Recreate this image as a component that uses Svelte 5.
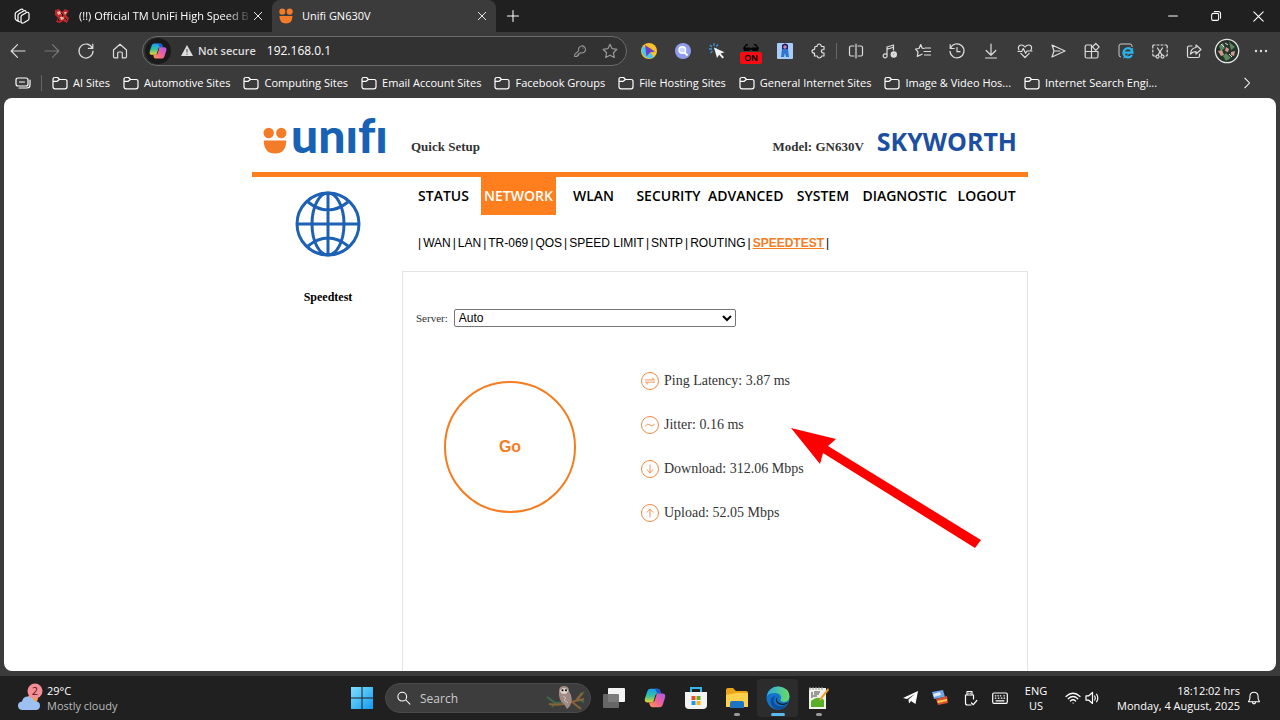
<script lang="ts">
  type Folder = { name: string };

  // stroked 16x16 icons
  const icons: Record<string, string> = {
    workspaces: 'M3.5 13 L2.2 12 Q1.2 11.4 1.2 10.2 V6 Q1.2 4.8 2.2 4.2 L7 1.3 Q8.4 .6 9 1.8 M6 14 Q4 13.6 4 12 V7.6 Q4 6.4 5 5.8 L10 2.8 Q11.4 2.2 12 3.3 M7 8.8 Q7 7.8 7.9 7.2 L12.5 4.5 Q15 3.6 15 6 V10.5 Q15 11.6 14 12.2 L9.8 14.7 Q7 15.8 7 13.4 Z',
    back: 'M15 8 H1.2 M7.5 1.7 L1.2 8 L7.5 14.3',
    forward: 'M1 8 H14.8 M8.5 1.7 L14.8 8 L8.5 14.3',
    reload: 'M14.4 5.2 A7 7 0 1 0 15 8 M14.8 1 V5.4 H10.4',
    home: 'M1.5 7 L8 1.2 L14.5 7 V13.5 Q14.5 14.8 13.2 14.8 H10.3 V10 Q10.3 9 9.3 9 H6.7 Q5.7 9 5.7 10 V14.8 H2.8 Q1.5 14.8 1.5 13.5 Z',
    key: 'M6.6 7.6 A4 4 0 1 1 9.2 10 L8.3 10 L7.7 11.3 H6.3 V12.7 H4.8 V14.2 H2 V11.8 Z M11.3 4.6 h.2',
    star: 'M8 1.3 L10.1 5.7 L14.9 6.3 L11.4 9.7 L12.3 14.5 L8 12.2 L3.7 14.5 L4.6 9.7 L1.1 6.3 L5.9 5.7 Z',
    puzzle: 'M4 3.5 H6 Q6.3 1 8.2 1 Q10 1 10.4 3.5 H13 V6.5 Q10.4 6.4 10.4 8.2 Q10.4 10 13 10 V13 H10.5 Q10.2 15 8.4 15 Q6.5 15 6.2 13 H3.5 V10.2 Q1 10.2 1 8.3 Q1 6.5 3.5 6.3 Z',
    split: 'M8 1 V15 M6 3 H3 Q1.5 3 1.5 4.5 V11.5 Q1.5 13 3 13 H6 M10 3 H13 Q14.5 3 14.5 4.5 V11.5 Q14.5 13 13 13 H10',
    music: 'M5 12 V4 L11.5 2 V7 M5 6.3 L11.5 4.3 M5 12 A2 2 0 1 1 4.9 11.8 M13.8 11.5 A2 2 0 1 1 9.8 11.5 A2 2 0 1 1 13.8 11.5 M12.8 11.5 A1 1 0 1 1 10.8 11.5 A1 1 0 1 1 12.8 11.5 M14.4 11.5 A2.6 2.6 0 1 1 9.2 11.5 A2.6 2.6 0 1 1 14.4 11.5',
    favorites: 'M9 5.5 L7.2 5.2 L5.7 1.5 L4 5.5 L.6 6 L3 8.8 L2.3 13.4 L7 11.2 M10 5 H15.5 M9 8.5 H15.5 M9.5 12 H15.5',
    history: 'M1.2 1.5 V5.5 H5.2 M1.5 5.2 A7 7 0 1 1 1 8.4 M8 4.5 V8.7 H11',
    download: 'M8 1 V12 M3.2 7.5 L8 12.2 L12.8 7.5 M2.5 15 H13.5',
    heart: 'M2 7 Q.4 3.8 3 2.3 Q5.8 1.2 8 4 Q10.2 1.2 13 2.3 Q15.6 3.8 14 7 M1 8.5 H4.7 L6.3 5.5 L8.6 10.3 L10 8 H15 M3.8 10.3 L8 14.5 L12.2 10.3',
    send: 'M2 2 L15 8 L2 14 L4 8 Z M4 8 H10',
    apps: 'M1.2 3.5 Q1.2 2 2.7 2 H7.5 V15 H2.7 Q1.2 15 1.2 13.500 Z M1.2 8.5 H14 V13.500 Q14 15 12.500 15 H7.5 M11.800 .5 L15.200 3.900 L11.800 7.300 L8.400 3.900 Z',
    capture: 'M.8 5 V3 Q.8 2 2 2 H3 M5 2 H7 M9 2 H11 M13 2 H14 Q15.2 2 15.2 3 V5 M.8 7 V9 M15.2 7 V9 M.8 11 V12 Q.8 13 2 13 H3 M15.2 11 V12 Q15.2 13 14 13 M5.5 5 L9.8 11.6 M10.5 5 L6.2 11.6 M7 13.2 A1.5 1.5 0 1 1 6.9 12.9 M12 13.2 A1.5 1.5 0 1 1 11.9 12.9',
    share: 'M6 3 H3 Q1.5 3 1.5 4.5 V13 Q1.5 14.5 3 14.5 H12 Q13.5 14.5 13.5 13 V11 M10 2 L15 6.5 L10 11 V8.6 Q6.5 8.6 4.5 11 Q5 5 10 4.5 Z',
    more: 'M2.5 8 h.2 M8 8 h.2 M13.5 8 h.2',
    folder: 'M1 4.5 Q1 2.5 3 2.5 H5.6 L7.5 4.5 H13 Q15 4.5 15 6.3 V11.8 Q15 13.8 13 13.8 H3 Q1 13.8 1 11.8 Z M1 6.3 H5.2 L7.4 4.5',
    hub: 'M3 3 H11 Q13 3 13 5 V9 Q13 11 11 11 H3 Q1 11 1 9 V5 Q1 3 3 3 Z M4.5 7 H9.5 M15 5 V10 Q15 13 12 13 H4',
    chevron: 'M5.5 2.5 L11 8 L5.5 13.5',
    close: 'M3 3 L13 13 M13 3 L3 13',
    plus: 'M8 1.7 V14.3 M1.7 8 H14.3',
    minimize: 'M3 8 H13',
    restore: 'M3 7 Q3 5 5 5 H9.5 Q11 5 11 6.5 V11.5 Q11 13 9.5 13 H4.5 Q3 13 3 11.5 Z M6 2.8 H10.5 Q13.2 2.8 13.2 5.5 V10.5',
    search: 'M11 6.5 A5 5 0 1 1 1 6.5 A5 5 0 1 1 11 6.5 M9.8 10 L14.8 15',
    usb: 'M5 5 V1.5 H10 V5 M3.5 5 H11.5 V9 M3.5 5 V13 Q3.5 15 5.5 15 H9 M6.7 3.2 h.1 M8.3 3.2 h.1 M9.5 13 L11.3 14.7 L14.8 10.5',
    keyboard: 'M2 3 H14 Q15.3 3 15.3 4.3 V12 Q15.3 13.3 14 13.3 H2 Q.7 13.3 .7 12 V4.3 Q.7 3 2 3 Z M3.3 5.8 h.6 M5.8 5.8 h.6 M8.3 5.8 h.6 M11.8 5.8 h.6 M3.3 8.2 h.6 M6.3 8.2 h.6 M9.3 8.2 h.6 M12 8.2 h.6 M4 10.8 H12',
    wifi: 'M1 6.5 Q8 0 15 6.5 M3.2 8.8 Q8 4.2 12.8 8.8 M5.4 11 Q8 8.5 10.6 11 M8 13 h.2',
    volume: 'M1 5.8 H3.8 L7.5 2.5 V13.5 L3.8 10.2 H1 Z M9.7 6 Q11 8 9.7 10 M11.6 4.2 Q14 8 11.6 11.8',
    bell: 'M8 1.5 Q12.5 1.5 12.7 6.2 V9 L14.3 12.2 H1.7 L3.3 9 V6.2 Q3.5 1.5 8 1.5 Z M6 12.5 Q6.3 14.7 8 14.7 Q9.7 14.7 10 12.5',
    ping: 'M2 6.5 H14 L11 4 M14 9.5 H2 L5 12',
    jitter: 'M2 8.8 Q5.3 5 8 8 Q10.7 11 14 7.2',
    down: 'M8 2.5 V13 M4 9 L8 13 L12 9',
    up: 'M8 13.5 V3 M4 7 L8 3 L12 7',
  };

  const folders: Folder[] = [
    { name: 'AI Sites' },
    { name: 'Automotive Sites' },
    { name: 'Computing Sites' },
    { name: 'Email Account Sites' },
    { name: 'Facebook Groups' },
    { name: 'File Hosting Sites' },
    { name: 'General Internet Sites' },
    { name: 'Image & Video Hos...' },
    { name: 'Internet Search Engi...' },
  ];

  const tools = ['split', 'music', 'favorites', 'history', 'download', 'heart', 'send', 'apps', 'ie', 'capture', 'share', 'avatar', 'more'];
  const extensions = ['play', 'lens', 'cursor', 'glasses', 'person', 'puzzle'];
  const menu = ['STATUS', 'NETWORK', 'WLAN', 'SECURITY', 'ADVANCED', 'SYSTEM', 'DIAGNOSTIC', 'LOGOUT'];
  const submenu = ['WAN', 'LAN', 'TR-069', 'QOS', 'SPEED LIMIT', 'SNTP', 'ROUTING', 'SPEEDTEST'];
  const results = [
    { icon: 'ping', label: 'Ping Latency', value: '3.87 ms' },
    { icon: 'jitter', label: 'Jitter', value: '0.16 ms' },
    { icon: 'down', label: 'Download', value: '312.06 Mbps' },
    { icon: 'up', label: 'Upload', value: '52.05 Mbps' },
  ];

  let server = $state('auto');
  let url = $state('192.168.0.1');
</script>

{#snippet icon(name: string, size = 16)}
  <svg class="icon" width={size} height={size} viewBox="0 0 16 16" aria-hidden="true"><path d={icons[name]} /></svg>
{/snippet}

{#snippet copilot(size: number)}
  <svg width={size} height={size} viewBox="0 0 24 24" aria-hidden="true">
    <defs>
      <linearGradient id="cp-a" x1="0" y1="0" x2="0" y2="1"><stop offset="0" stop-color="#1b9df0" /><stop offset=".5" stop-color="#2fc2a0" /><stop offset="1" stop-color="#f3d02e" /></linearGradient>
      <linearGradient id="cp-b" x1="1" y1="0" x2="0" y2="1"><stop offset="0" stop-color="#a45cf0" /><stop offset=".5" stop-color="#f0609a" /><stop offset="1" stop-color="#ff9a4d" /></linearGradient>
    </defs>
    <path d="M7 2 H15 Q17 2 17.6 4 L18.5 7 H15 Q13 7 12.4 9 L10 17 H4 Q0 17 1 12.5 L3.6 4.5 Q4.5 2 7 2 Z" fill="url(#cp-a)" />
    <path d="M12 2 H15 Q17 2 17.6 4 L18.5 7 H14.5 Z" fill="#2457d6" />
    <path d="M17 22 H9 Q7 22 6.4 20 L5.5 17 H9 Q11 17 11.6 15 L14 7 H20 Q24 7 23 11.5 L20.4 19.5 Q19.5 22 17 22 Z" fill="url(#cp-b)" />
  </svg>
{/snippet}

{#snippet smiley(width: number, height: number)}
  <svg {width} {height} viewBox="0 0 24 27" aria-hidden="true">
    <g fill="#f47b28"><circle cx="5.7" cy="6" r="5.2" /><circle cx="18.3" cy="6" r="5.2" /><path d="M.8 13.5 H23.2 Q23.2 26.5 12 26.5 Q.8 26.5 .8 13.5 Z" /></g>
  </svg>
{/snippet}

<div class="desktop">
  <header class="tabs">
    <button class="workspaces" aria-label="Workspaces">{@render icon('workspaces')}</button>
    <div class="tab">
      <svg width="16" height="16" viewBox="0 0 16 16" aria-hidden="true">
        <path d="M1 2 L5 1 L8 4 L11 1 L15 3 L12 7 L15 10 L13 15 L9 13 L6 15 L2 14 L4 10 L1 7 Z" fill="#b9262b" />
        <path d="M3 4 L6 3 L7 6 L4 7 Z M10 4 L13 4 L11 7 Z M6 9 L9 8 L10 11 L7 12 Z" fill="#e8b9a0" />
        <path d="M7 5 L9 7 L8 9 M4 11 L5 13 M11 10 L13 12" stroke="#1c0c0e" fill="none" />
      </svg>
      <span class="title fade">(!!) Official TM UniFi High Speed B</span>
      <button class="close" aria-label="Close tab">{@render icon('close', 12)}</button>
    </div>
    <div class="tab active">
      {@render smiley(14, 16)}
      <span class="title">Unifi GN630V</span>
      <button class="close" aria-label="Close tab">{@render icon('close', 12)}</button>
    </div>
    <button class="new-tab" aria-label="New tab">{@render icon('plus', 14)}</button>
    <div class="window-controls">
      <button aria-label="Minimize">{@render icon('minimize', 14)}</button>
      <button aria-label="Restore">{@render icon('restore', 14)}</button>
      <button aria-label="Close">{@render icon('close', 15)}</button>
    </div>
  </header>

  <div class="toolbar">
    <button aria-label="Back">{@render icon('back')}</button>
    <button class="dim" aria-label="Forward">{@render icon('forward')}</button>
    <button aria-label="Reload">{@render icon('reload')}</button>
    <button aria-label="Home">{@render icon('home')}</button>
    <div class="address">
      <span class="copilot">{@render copilot(18)}</span>
      <svg width="12" height="11" viewBox="0 0 12 11" aria-hidden="true"><path d="M6 0 L12 11 H0 Z" fill="#ddd" /><path d="M6 4 V7.4 M6 8.6 V9.7" stroke="#444" /></svg>
      <label for="url">Not secure</label>
      <input id="url" type="text" bind:value={url} />
      <button class="dim-soft" aria-label="Passwords">{@render icon('key', 14)}</button>
      <button class="dim-soft last" aria-label="Add to favorites">{@render icon('star')}</button>
    </div>
    <div class="extensions">
      {#each extensions as ext}
        <button aria-label={ext}>
          {#if ext === 'play'}
            <svg width="16" height="16" viewBox="0 0 16 16"><circle cx="8" cy="8" r="8" fill="#f7c22d" /><path d="M2 3 A8 8 0 0 0 13 14 L8 8 Z" fill="#4bc3f0" /><path d="M4 2 L14 8.5 L9 9.5 L5.5 13.5 Z" fill="#6b3fc0" /></svg>
          {:else if ext === 'lens'}
            <svg width="16" height="16" viewBox="0 0 16 16"><circle cx="8" cy="8" r="8" fill="#8f9cec" /><circle cx="7.3" cy="7" r="3.3" fill="#c6d6ff" stroke="#fff" stroke-width="1.4" /><path d="M9.6 9.5 L12.5 12.5" stroke="#fff" stroke-width="1.8" /></svg>
          {:else if ext === 'cursor'}
            <svg width="16" height="16" viewBox="0 0 16 16"><path d="M5 0 V3 M1 2 L3 4 M0 6 H3 M1.5 10 L3.5 8 M9 1.5 L7.2 3.5 M8 6 H5" stroke="#3c94d8" stroke-width="1.3" /><path d="M5 4.5 L15.5 9.3 L11.6 10.5 L15 14.3 L13.5 15.6 L10.2 11.8 L8 15 Z" fill="#f4f4f4" /></svg>
          {:else if ext === 'glasses'}
            <svg class="glasses" width="24" height="26" viewBox="0 0 24 26"><path d="M5 10 L7 7 L9 6.5 M19 10 L17 7 L15 6.5" stroke="#000" fill="none" stroke-width="1.3" /><path d="M4 9.5 H11 L12 10.5 L13 9.5 H20 L19 13 H14 L12 11.5 L10 13 H5 Z" fill="#000" /><rect x="1" y="14" width="22" height="12" rx="2" fill="#fb0a12" /><text x="12" y="23" text-anchor="middle">ON</text></svg>
          {:else if ext === 'person'}
            <svg width="16" height="16" viewBox="0 0 16 16"><rect width="16" height="16" rx="1" fill="#a9cdfa" /><path d="M5 2 Q8 -1 11 2 V6 H5 Z" fill="#29145a" /><circle cx="8" cy="4" r="1.8" fill="#c08fb8" /><path d="M5 6 H11 L12 14 H9 L8 10 L7 14 H4 Z" fill="#2e74d0" /></svg>
          {:else}
            {@render icon(ext)}
          {/if}
        </button>
      {/each}
    </div>
    <span class="divider"></span>
    <div class="tools">
      {#each tools as tool}
        <button aria-label={tool}>
          {#if tool === 'ie'}
            <svg width="16" height="16" viewBox="0 0 16 16"><path d="M14 4 V3 Q14 1 12 1 H3 Q1 1 1 3 V12 Q1 14 3 14" stroke="#ccc" fill="none" /><path d="M14 12 A4.6 4.6 0 1 1 14.6 9.7 H6" stroke="#29b5ec" stroke-width="2.2" fill="none" /><path d="M5 15 Q9 14.5 15 5" stroke="#29b5ec" fill="none" /></svg>
          {:else if tool === 'avatar'}
            <svg width="26" height="26" viewBox="0 0 26 26"><circle cx="13" cy="13" r="11.5" fill="#26332a" /><path d="M5 8 L9 5 L11 10 L7 13 Z M15 4 L21 9 L17 12 Z M9 18 L12 15 L17 20 L12 23 Z" fill="#5d8760" /><path d="M4 13 L8 12 L10 17 L7 18 Z M12 9 L15 11 L14 14 L11 13 Z M17 14 L21 13 L20 18 L17 17 Z" fill="#d19a92" /><path d="M7 6 L10 9 M15 16 L18 19 M11 5 L14 7" stroke="#e9e4dd" /><circle cx="13" cy="13" r="11.7" fill="none" stroke="#e6e6e6" stroke-width="1.3" /></svg>
          {:else if tool === 'more'}
            <svg width="14" height="4" viewBox="0 0 14 4"><g fill="#ddd"><circle cx="2" cy="2" r="1.2" /><circle cx="7" cy="2" r="1.2" /><circle cx="12" cy="2" r="1.2" /></g></svg>
          {:else}
            {@render icon(tool)}
          {/if}
        </button>
      {/each}
    </div>
  </div>

  <nav class="bookmarks" aria-label="Favorites">
    <button aria-label="Favorites hub">{@render icon('hub')}</button>
    <span class="divider"></span>
    {#each folders as folder}
      <a href="#folder">{@render icon('folder')}{folder.name}</a>
    {/each}
    <button class="overflow" aria-label="More favorites">{@render icon('chevron', 14)}</button>
  </nav>

  <div class="viewport">
    <div class="site">
      <header class="brand">
        <div class="unifi">{@render smiley(24, 27)}<span aria-label="unifi">unıfı</span></div>
        <a class="quick" href="#setup">Quick Setup</a>
        <span class="model">Model: GN630V</span>
        <span class="skyworth">SKYWORTH</span>
      </header>

      <div class="columns">
        <aside>
          <svg width="66" height="66" viewBox="0 0 66 66" aria-hidden="true">
            <g fill="none" stroke="#1d61b5" stroke-width="3"><circle cx="33" cy="33" r="31" /><ellipse cx="33" cy="33" rx="16" ry="31" /><path d="M33 2 V64 M2 33 H64 M13 11 Q33 27 53 11 M13 55 Q33 39 53 55" /></g>
          </svg>
          <h2>Speedtest</h2>
        </aside>

        <main>
          <nav class="menu" aria-label="Main">
            {#each menu as item}
              <a href="#menu" class:on={item === 'NETWORK'}>{item}</a>
            {/each}
          </nav>
          <nav class="submenu" aria-label="Network">
            <span>|</span>
            {#each submenu as item}
              <a href="#submenu" class:on={item === 'SPEEDTEST'}>{item}</a>
              <span>|</span>
            {/each}
          </nav>

          <section class="panel">
            <div class="server">
              <label for="server">Server:</label>
              <select id="server" bind:value={server}>
                <option value="auto">Auto</option>
              </select>
            </div>
            <div class="test">
              <button class="go">Go</button>
              <ul>
                {#each results as r}
                  <li><span class="ring">{@render icon(r.icon, 12)}</span>{r.label}: {r.value}</li>
                {/each}
              </ul>
            </div>
            <svg class="pointer" width="190" height="120" viewBox="0 0 190 120" aria-hidden="true"><path d="M0 0 L45 11 L37 18 L190 112 L184 120 L32 25 L29 36 Z" fill="#f00" /></svg>
          </section>
        </main>
      </div>
    </div>
  </div>

  <footer class="taskbar">
    <button class="weather">
      <svg width="26" height="30" viewBox="0 0 26 30" aria-hidden="true">
        <circle cx="16" cy="15" r="5" fill="#f5a04d" />
        <path d="M6 27 Q1 27 1 22.5 Q1 19 5 18.5 Q6 13.5 11 13.5 Q15.5 13.5 17 18 Q23 18 23 22.5 Q23 27 18.5 27 Z" fill="#9dc0f2" />
        <circle cx="18" cy="8" r="7.5" fill="#f78d95" /><text x="18" y="12" text-anchor="middle">2</text>
      </svg>
      <span><b>29°C</b><br />Mostly cloudy</span>
    </button>
    <button class="app" aria-label="Start">
      <svg width="22" height="22" viewBox="0 0 22 22"><defs><linearGradient id="win" x1="0" y1="0" x2="1" y2="1"><stop offset="0" stop-color="#80e0ff" /><stop offset="1" stop-color="#119af0" /></linearGradient></defs><path d="M0 0 H10.5 V10.5 H0 Z M11.5 0 H22 V10.5 H11.5 Z M0 11.5 H10.5 V22 H0 Z M11.5 11.5 H22 V22 H11.5 Z" fill="url(#win)" /></svg>
    </button>
    <div class="search">
      {@render icon('search', 14)}
      <input type="text" placeholder="Search" aria-label="Search" />
      <svg width="40" height="26" viewBox="0 0 40 26" aria-hidden="true">
        <path d="M1 12 L9 18 L6 22 M9 18 L20 17 M30 15 L38 7 M32 14 L38 17" stroke="#3f6a4b" stroke-width="2" fill="none" />
        <path d="M3 19 Q16 21 25 17 L38 14 M26 17 L35 24 M31 15 L36 8" stroke="#8a6238" stroke-width="2.2" fill="none" />
        <path d="M13 6 Q13 1 18 1 Q23 1 23 6 Q28 14 24 21 L21 24 L18 19 Q12 15 13 6 Z" fill="#a08a86" />
        <path d="M14 5 Q18 1 22 5 Q22 9 18 9 Q14 9 14 5 Z" fill="#ddd0c8" /><circle cx="16.5" cy="5.3" r="1" /><circle cx="20" cy="5.3" r="1" />
        <path d="M17 11 L20 13 L18 15 L22 18" stroke="#d4b8ae" fill="none" />
      </svg>
    </div>
    <div class="apps">
      <button class="app" aria-label="Task view"><svg width="24" height="22" viewBox="0 0 24 22"><rect x="6" y="1" width="17" height="14" rx="1" fill="#f4f4f4" /><rect x="1" y="7" width="16" height="14" rx="1" fill="#6f6f6f" opacity=".9" /></svg></button>
      <button class="app" aria-label="Copilot">{@render copilot(22)}</button>
      <button class="app" aria-label="Store"><svg width="22" height="24" viewBox="0 0 22 24"><path d="M6 6 V2 H16 V6" stroke="#35b5ec" stroke-width="2" fill="none" /><path d="M0 6 H22 V19 Q22 23 18 23 H4 Q0 23 0 19 Z" fill="#f3f3f3" /><path d="M6.5 10 h4 v4 h-4 Z" fill="#e74c2b" /><path d="M11.5 10 h4 v4 h-4 Z" fill="#6dad1e" /><path d="M6.5 15 h4 v4 h-4 Z" fill="#1b9be5" /><path d="M11.5 15 h4 v4 h-4 Z" fill="#fbb315" /></svg></button>
      <button class="app open" aria-label="File Explorer"><svg width="24" height="22" viewBox="0 0 24 22"><path d="M1 3 Q1 1 3 1 H8 L11 4 H21 Q23 4 23 6 V19 H1 Z" fill="#e9a61c" /><path d="M1 8 L11 6 H23 V20 H1 Z" fill="#ffd04b" /><path d="M5 21 V16 Q5 14 7 14 H17 Q19 14 19 16 V21 Z" fill="#1d74c4" /></svg></button>
      <button class="app open current" aria-label="Edge">
        <svg width="24" height="24" viewBox="0 0 24 24"><defs><linearGradient id="edge" x1="0" y1="0" x2="1" y2="0"><stop offset="0" stop-color="#2aa9e6" /><stop offset="1" stop-color="#6bdc62" /></linearGradient></defs><circle cx="12" cy="12" r="11.5" fill="#1472c8" /><path d="M.8 10 Q3 .5 12.5 .5 Q23 1.5 23.5 10.5 Q23 16 17.5 16 Q13 15.5 15 12 Q15 7.5 9.5 7 Q3 7 .8 10 Z" fill="url(#edge)" /><path d="M9.5 10 Q6 14 9 18 Q13 22 21 18.5 Q17 24 11 23.4 Q4 21 4.5 14 Q5.5 10.5 9.5 10 Z" fill="#0d4e9d" /><path d="M11.5 10.5 Q9.5 14 12.5 16.5 Q16.5 19 22.5 16 Q21.5 18.3 19 18.7 Q12.5 20 10.2 15.5 Q9.5 12 11.5 10.5 Z" fill="#202020" /></svg>
      </button>
      <button class="app open" aria-label="Editor"><svg width="22" height="24" viewBox="0 0 22 24"><path d="M1 2 H18 V23 H1 Z" fill="#f3f3ee" /><path d="M3 15 Q10 9 16 14 V21 H3 Z" fill="#5aaf29" /><path d="M4 6 V12 M6 6 H12 M6 8 H11 M5 10 H9" stroke="#444" fill="none" /><path d="M2 1 V4 M5 1 V4 M8 1 V4 M11 1 V4 M14 1 V4" stroke="#999" /><path d="M20 2 L12 12 L11 15 L14 13 L21 4 Z" fill="#e9a32b" /></svg></button>
    </div>
    <div class="tray">
      <button aria-label="Telegram"><svg width="15" height="14" viewBox="0 0 15 14"><path d="M0 7 L15 0 L12.5 13 L8 10 L6 12.5 L5.5 8.5 L12 3 L4 8 Z" fill="#fff" /></svg></button>
      <button aria-label="Display"><svg width="16" height="16" viewBox="0 0 16 16"><path d="M0 2 L11 0 L13 7 L2 9 Z" fill="#6fa5e8" /><path d="M1 4 L8 2 L9 5 L2 7 Z" fill="#dce9f6" /><path d="M4 9 L15 6 L16 13 L6 15 Z" fill="#d8502c" /><path d="M5 11 L15 9 L15 11 L6 13 Z" fill="#f4c94e" /></svg></button>
      <button aria-label="USB">{@render icon('usb')}</button>
      <button aria-label="Touch keyboard">{@render icon('keyboard')}</button>
      <button class="lang">ENG<br />US</button>
      <button class="net" aria-label="Network and sound">{@render icon('wifi')}{@render icon('volume')}</button>
      <button class="clock">18:12:02 hrs<br />Monday, 4 August, 2025</button>
      <button class="bell" aria-label="Notifications">{@render icon('bell', 14)}</button>
    </div>
  </footer>
</div>

<style>
  :global(body) { background: #3b3b3b; }
  .desktop {
    height: 100vh; display: flex; flex-direction: column;
    font-family: "Open Sans", "Noto Sans", sans-serif; font-size: 11px; color: #fff;
    background: #3b3b3b;
  }
  button {
    display: flex; align-items: center; justify-content: center;
    padding: 0; border: 0; background: none; color: inherit; font: inherit; flex-shrink: 0;
  }
  a { color: inherit; text-decoration: none; }
  svg { flex-shrink: 0; }
  .icon { fill: none; stroke: currentColor; stroke-width: 1.2; stroke-linecap: round; stroke-linejoin: round; overflow: visible; }

  /* tab strip */
  .tabs { display: flex; flex: 0 0 32px; background: #202020; }
  .workspaces { width: 44px; }
  .tab { display: flex; align-items: center; width: 228px; padding: 0 8px 1px 10px; box-sizing: border-box; }
  .tab.active { width: 224px; padding-left: 7px; background: #3b3b3b; border-radius: 8px 8px 0 0; }
  .title { flex: 1; min-width: 0; padding-left: 9px; white-space: nowrap; }
  .fade { mask-image: linear-gradient(90deg, #000 86%, transparent); }
  .close { width: 12px; }
  .new-tab { width: 34px; }
  .window-controls { display: flex; margin-left: auto; }
  .window-controls button { width: 43px; }

  /* toolbar */
  .toolbar { display: flex; align-items: center; flex: 0 0 38px; padding: 0 2px 1px 1px; box-sizing: border-box; color: #ddd; }
  .toolbar button { width: 34px; height: 30px; }
  .toolbar .dim { color: #777; }
  .address {
    flex: 1; min-width: 0; height: 30px; box-sizing: border-box; margin: 0 5px;
    display: flex; align-items: center; gap: 5px; padding: 0 4px 0 2px;
    background: #323232; border: 1px solid #6b6b6b; border-radius: 15px;
  }
  .copilot {
    display: flex; align-items: center; justify-content: center;
    width: 26px; height: 26px; margin-right: 5px; border-radius: 50%; background: #1a1a1a;
  }
  .address label { font-weight: 600; white-space: nowrap; }
  .address input {
    flex: 1; min-width: 0; margin-left: 6px; padding: 0; border: 0; outline: 0;
    background: none; color: #fff; font: inherit; font-size: 12px;
  }
  .toolbar .dim-soft { width: 25px; color: #999; }
  .extensions { display: flex; }
  .glasses { font: bold 9px "Liberation Sans", sans-serif; }
  .divider { width: 1px; height: 16px; flex-shrink: 0; background: #666; }
  .toolbar .divider { margin-right: 2px; }
  .tools { display: flex; flex: 0 0 439px; min-width: 0; }
  .tools button { flex: 1; min-width: 0; }

  /* favorites bar */
  .bookmarks { display: flex; align-items: center; flex: 0 0 28px; padding: 0 26px 3px 15px; box-sizing: border-box; }
  .bookmarks .divider { margin: 0 10px; }
  .bookmarks a { display: flex; align-items: center; gap: 5px; margin-right: 13px; white-space: nowrap; }
  .bookmarks .overflow { margin-left: auto; }

  /* router page */
  .viewport {
    flex: 1; min-height: 0; display: flex; margin: 0 4px 5px; overflow: hidden;
    background: #fff; border-radius: 8px; color: #000;
  }
  .site { width: 100%; max-width: 776px; margin: 0 auto; display: flex; flex-direction: column; font-family: "Liberation Serif", serif; }
  .brand {
    display: flex; align-items: flex-end; height: 58px; padding: 0 11px 16px;
    border-bottom: 5px solid #ff7f1e;
    font-size: 13px; font-weight: 700; line-height: 18px; color: #333;
  }
  .unifi { display: flex; align-items: flex-end; gap: 4px; width: 148px; padding-bottom: 2px; box-sizing: border-box; color: #1762b4; }
  .unifi span { font: 900 48px/38px Lato, sans-serif; font-variant-ligatures: none; }
  .model { margin-left: auto; }
  .skyworth { margin-left: 13px; font: 700 25px/30px "Open Sans", sans-serif; color: #1c4fa1; }

  .columns { flex: 1; display: flex; }
  aside { width: 150px; padding-left: 2px; box-sizing: border-box; display: flex; flex-direction: column; align-items: center; padding-top: 14px; gap: 32px; }
  aside h2 { margin: 0; font-size: 12px; line-height: 16px; }
  main { flex: 1; min-width: 0; display: flex; flex-direction: column; }
  .menu { display: flex; padding-left: 4px; font: 600 14px/38px "Open Sans", "Noto Sans", sans-serif; }
  .menu a { min-width: 75px; padding: 0 2px; box-sizing: border-box; text-align: center; }
  .menu a.on { background: #ff7f1e; color: #fff; }
  .submenu { display: flex; gap: 2px; padding: 20px 16px; font: 12px/16px "Liberation Sans", sans-serif; white-space: nowrap; }
  .submenu a.on { color: #f57c1f; font-weight: 700; text-decoration: underline; }

  .panel { position: relative; flex: 1; border: 1px solid #e4e4e4; border-bottom: 0; padding: 37px 13px 0; }
  .server { display: flex; align-items: center; gap: 6px; font-size: 11px; color: #333; }
  .server select {
    width: 282px; height: 18px; padding: 0; border: 1px solid #767676; border-radius: 2px;
    background: #fff; color: #000; font: 12px "Liberation Sans", sans-serif;
  }
  .test { display: flex; align-items: center; gap: 65px; padding: 45px 28px 0; }
  .go {
    width: 132px; height: 132px; border: 2px solid #f57c1f; border-radius: 50%;
    color: #f57c1f; font: 700 16px "Liberation Sans", sans-serif;
  }
  ul { margin: 0; padding: 0; list-style: none; display: grid; gap: 26px; }
  li { display: flex; align-items: center; gap: 5px; font-size: 14px; line-height: 18px; color: #333; }
  .ring {
    display: flex; align-items: center; justify-content: center; box-sizing: border-box;
    width: 18px; height: 18px; border: 1px solid #f08a45; border-radius: 50%; color: #f08a45;
  }
  .pointer { position: absolute; left: 388px; top: 156px; }

  /* taskbar */
  .taskbar { display: flex; align-items: center; flex: 0 0 44px; background: #202020; }
  .weather { flex: 0 0 341px; justify-content: flex-start; gap: 4px; padding-left: 17px; box-sizing: border-box; text-align: left; line-height: 15px; color: #bbb; }
  .weather b { font-weight: 400; color: #fff; }
  .weather text { font-size: 11px; fill: #50161c; }
  .app { width: 41px; height: 38px; position: relative; }
  .search {
    display: flex; align-items: center; gap: 9px; width: 206px; height: 30px; margin: 0 2px 0 3px;
    padding: 0 4px 0 11px; box-sizing: border-box; background: #3d3d3d; border: 1px solid #4a4a4a; border-radius: 15px;
  }
  .search input { flex: 1; min-width: 0; padding: 0; border: 0; outline: 0; background: none; color: #fff; font: inherit; font-size: 12px; }
  .search input::placeholder { color: #ccc; opacity: 1; }
  .apps { display: flex; }
  .current { background: #2c2c2c; border-radius: 4px; }
  .open::after { content: ""; position: absolute; bottom: 1px; width: 6px; height: 3px; border-radius: 2px; background: #999; }
  .current::after { width: 14px; background: #5cb8f0; }
  .tray { display: flex; align-items: center; margin-left: auto; padding-right: 19px; }
  .tray button { min-width: 30px; line-height: 15px; }
  .tray .lang { width: 42px; }
  .tray .net { width: 52px; gap: 4px; }
  .clock { width: 131px; text-align: right; justify-content: flex-end; }
  .tray .bell { min-width: 0; margin-left: 7px; }
</style>
